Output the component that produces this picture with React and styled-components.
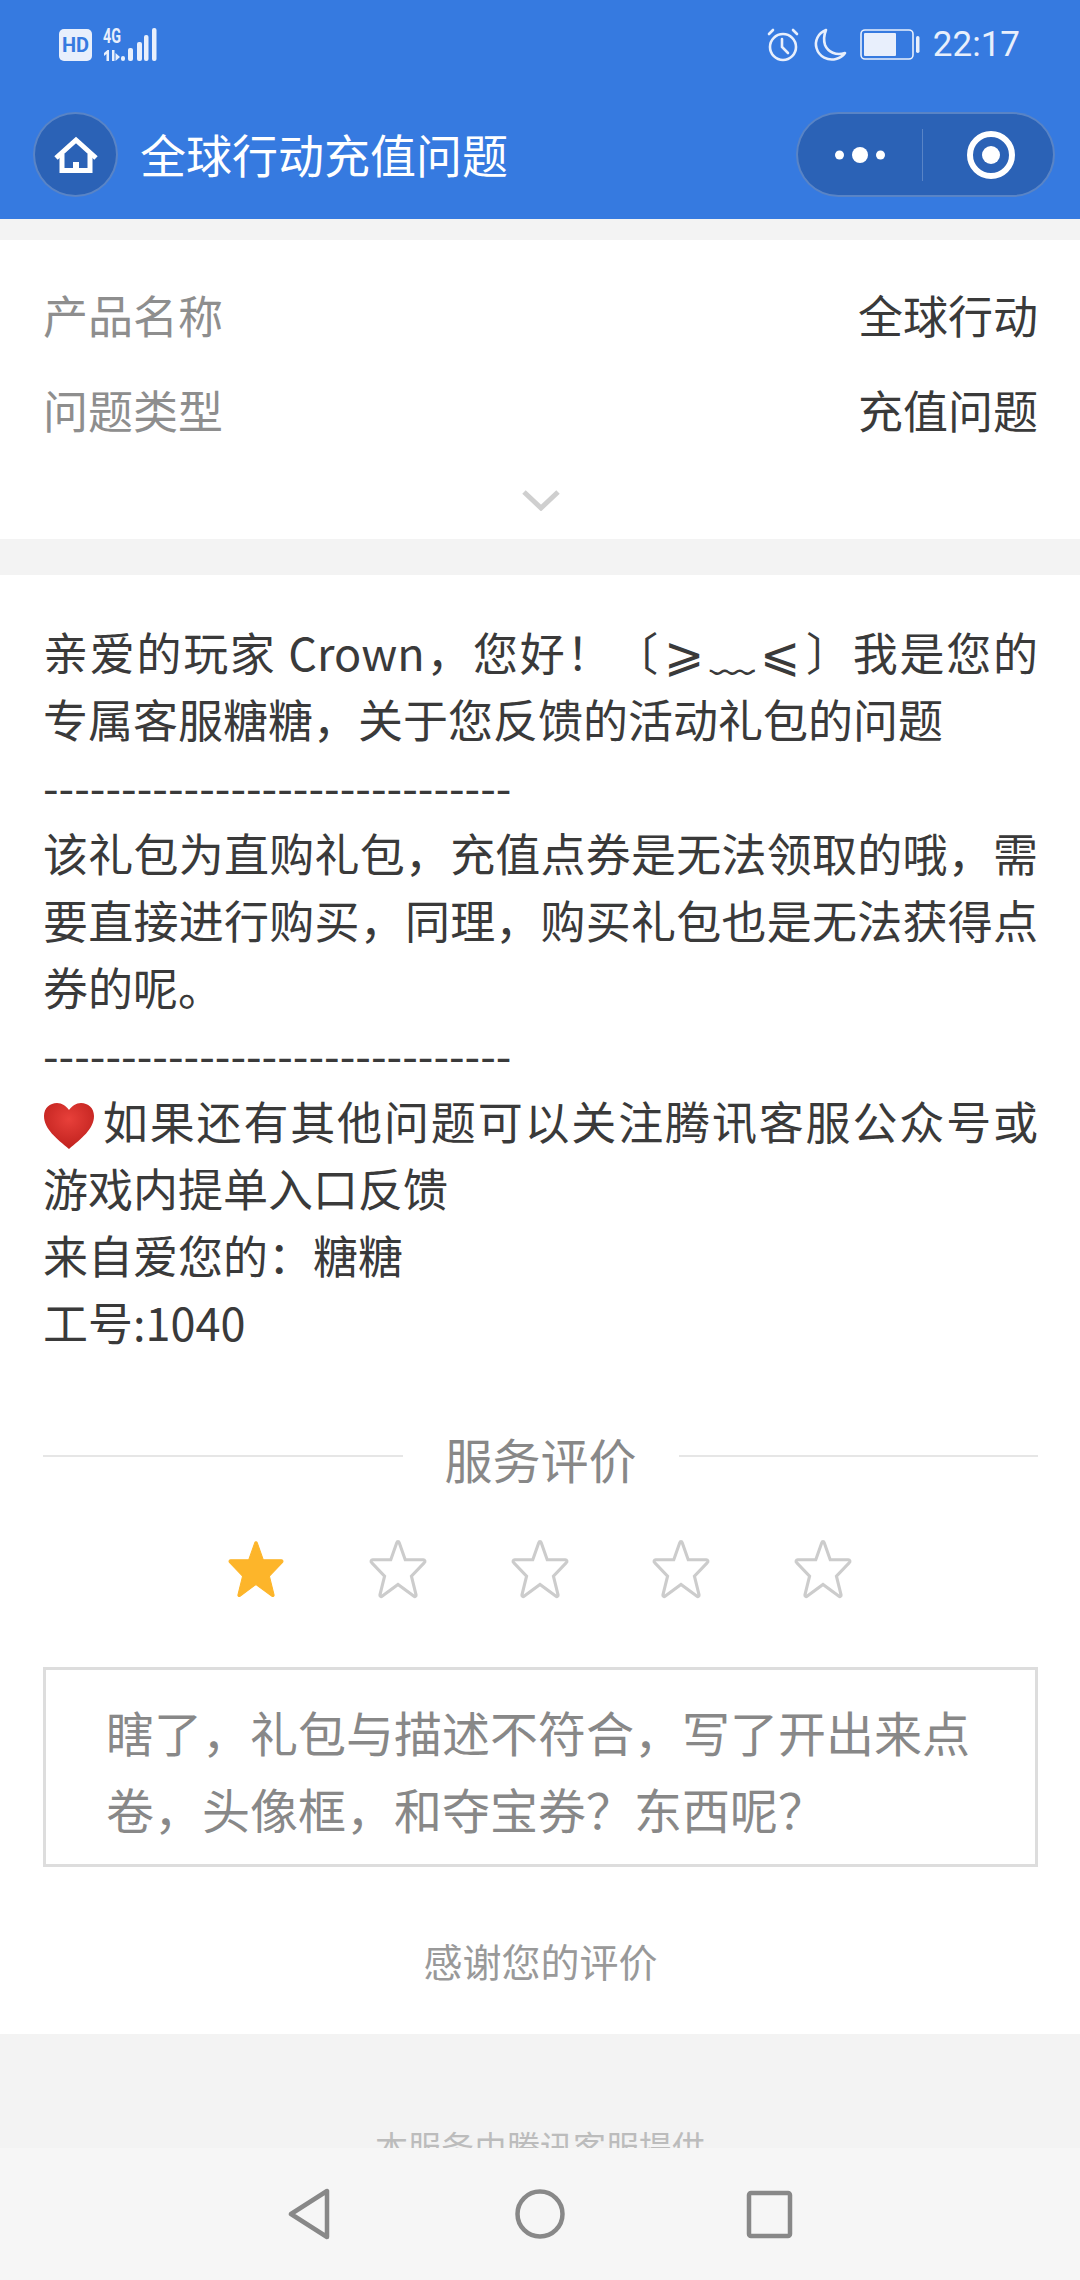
import React from "react";
import styled, { createGlobalStyle } from "styled-components";

const GlobalStyle = createGlobalStyle`
  html, body {
    margin: 0;
    padding: 0;
    background: #f3f3f3;
  }
  * {
    box-sizing: border-box;
  }
`;

const Page = styled.div`
  position: relative;
  width: 1080px;
  height: 2280px;
  overflow: hidden;
  background: #f3f3f3;
  font-family: "Noto Sans CJK SC", "Noto Sans", sans-serif;
`;

const Header = styled.header`
  height: 219px;
  background: #367ae0;
  color: #fff;
`;

const StatusBar = styled.div`
  height: 92px;
  padding: 23px 60px 0 59px;
  display: flex;
  align-items: flex-start;
  justify-content: space-between;
  color: #e8effc;
`;

const StatusGroup = styled.div`
  display: flex;
  align-items: center;
  gap: ${(p) => p.$gap || 0}px;
  height: 44px;
`;

const HdBadge = styled.span`
  width: 33px;
  height: 32px;
  border-radius: 5px;
  background: #e8effc;
  color: #367ae0;
  font: 700 20px/1 "Roboto", sans-serif;
  display: flex;
  align-items: center;
  justify-content: center;
`;

const Clock = styled.span`
  font: 400 35px/44px "Roboto", sans-serif;
`;

const NavBar = styled.div`
  height: 127px;
  padding: 20px 25px 0 33px;
  display: flex;
  align-items: flex-start;
`;

const HomeButton = styled.div`
  width: 85px;
  height: 85px;
  border-radius: 50%;
  background: #2b62b6;
  border: 2px solid rgba(255, 255, 255, 0.22);
  display: flex;
  align-items: center;
  justify-content: center;
`;

const Title = styled.h1`
  margin: 0 0 0 22px;
  font-size: 46px;
  font-weight: 400;
  line-height: 83px;
`;

const Capsule = styled.div`
  margin-left: auto;
  width: 259px;
  height: 85px;
  border-radius: 43px;
  background: #2b62b6;
  border: 2px solid rgba(255, 255, 255, 0.22);
  display: flex;
  align-items: center;
`;

const CapsuleCell = styled.div`
  flex: 1;
  height: 52px;
  display: flex;
  align-items: center;
  justify-content: center;
  padding-left: ${(p) => (p.$divided ? "6px" : "0")};
  border-left: ${(p) => (p.$divided ? "1px solid rgba(255,255,255,0.22)" : "none")};
`;

const ProductCard = styled.section`
  margin-top: 21px;
  height: 299px;
  background: #fff;
  padding: 27px 42px 0 43px;
`;

const InfoRow = styled.div`
  height: 95px;
  display: flex;
  align-items: center;
  justify-content: space-between;
  font-size: 45px;
`;

const InfoLabel = styled.span`
  color: #8e8e8e;
`;

const InfoValue = styled.span`
  color: #3a3a3a;
`;

const Expand = styled.div`
  height: 85px;
  display: flex;
  align-items: center;
  justify-content: center;
`;

const MessageCard = styled.section`
  margin-top: 36px;
  height: 1459px;
  background: #fff;
  padding: 43px 42px 0 43px;
`;

const Message = styled.div`
  font-size: 45px;
  line-height: 67px;
  color: #3a3a3a;
  text-align: justify;
  height: 739px;
`;

const Kaomoji = styled.span`
  font-size: 48px;
  line-height: 1;
  padding: 0 4px;
`;

const Heart = styled.svg`
  width: 52px;
  height: 47px;
  margin-right: 6px;
  vertical-align: -9px;
`;

const RatingHeading = styled.div`
  margin-top: 66px;
  height: 70px;
  display: flex;
  align-items: center;
  gap: 42px;
  font-size: 48px;
  color: #888;
`;

const RatingLine = styled.span`
  flex: 1;
  height: 2px;
  background: #e6e6e6;
  margin-top: -4px;
`;

const Stars = styled.div`
  margin-top: 44px;
  padding: 0 183px 0 181px;
  display: flex;
  justify-content: space-between;
`;

const StarIcon = styled.svg`
  width: 64px;
  height: 64px;
  display: block;
`;

const Comment = styled.div`
  margin-top: 66px;
  height: 200px;
  border: 3px solid #ddd;
  padding: 23px 60px 0;
  font-size: 48px;
  line-height: 77px;
  color: #888;
`;

const Thanks = styled.div`
  margin-top: 64px;
  text-align: center;
  font-size: 39px;
  line-height: 58px;
  color: #999;
`;

const Footer = styled.footer`
  padding-top: 88px;
  text-align: center;
  font-size: 33px;
  line-height: 48px;
  color: #bcbcbc;
`;

const BottomNav = styled.nav`
  position: absolute;
  left: 0;
  right: 0;
  bottom: 0;
  height: 132px;
  background: #f6f6f6;
  display: flex;
  align-items: center;
  justify-content: center;
  gap: 180px;
`;

const NavIcon = styled.svg`
  width: 50px;
  height: 52px;
  display: block;
`;

function SignalIcon() {
  return (
    <svg width="54" height="34" viewBox="0 0 54 34" fill="#e8effc">
      <text
        x="0"
        y="15"
        fontFamily="Roboto, sans-serif"
        fontSize="20"
        fontWeight="700"
        textLength="18"
        lengthAdjust="spacingAndGlyphs"
      >
        4G
      </text>
      <path d="M3.500 33V26L1 28v-3l3.500-3H6v11zM9 22h2.500v11H9zM12.500 25l4.500 4-4.500 4z" />
      <rect x="18" y="28" width="4" height="5" rx="2" />
      <rect x="25" y="20" width="5" height="13" rx="2" />
      <rect x="34" y="14" width="5" height="19" rx="2" />
      <rect x="41" y="7" width="4.500" height="26" rx="2" />
      <rect x="49" y="0" width="4.500" height="33" rx="2" />
    </svg>
  );
}

function AlarmIcon() {
  return (
    <svg width="34" height="34" viewBox="0 0 34 34" fill="none" stroke="#e8effc" strokeWidth="2.600" strokeLinecap="round">
      <circle cx="17" cy="19" r="13" />
      <path d="M16 11v8l6 6M3 6l4-4M31 6l-4-4" />
    </svg>
  );
}

function MoonIcon() {
  return (
    <svg width="34" height="34" viewBox="0 0 34 34" fill="none" stroke="#e8effc" strokeWidth="2.600" strokeLinejoin="round">
      <path d="M13 2C5 5 1.500 13 3.500 20 6 29 15 33 23 31c4-1 7-3 9-6-9 3-17-1-20-8-1.500-5-1-10 1-15z" />
    </svg>
  );
}

function BatteryIcon() {
  return (
    <svg width="60" height="32" viewBox="0 0 60 32">
      <rect x="1" y="1" width="52" height="29" rx="4" fill="none" stroke="#e8effc" strokeWidth="1.600" />
      <rect x="4" y="4" width="32" height="23" rx="1" fill="#e8effc" />
      <rect x="56" y="7" width="3.500" height="17" rx="1.700" fill="#e8effc" />
    </svg>
  );
}

function HomeIcon() {
  return (
    <svg width="46" height="40" viewBox="0 0 46 40" fill="none" stroke="#fff" strokeWidth="5">
      <path d="M3 23L23 5l20 18" />
      <path d="M9 19v16.500h28V19" />
      <rect x="20" y="27" width="6" height="8" fill="#fff" stroke="none" />
    </svg>
  );
}

function MenuDots() {
  return (
    <svg width="50" height="18" viewBox="0 0 50 18" fill="#fff">
      <circle cx="4.500" cy="9" r="4.500" />
      <circle cx="25" cy="9" r="8" />
      <circle cx="45.500" cy="9" r="4.500" />
    </svg>
  );
}

function CloseTarget() {
  return (
    <svg width="48" height="48" viewBox="0 0 48 48">
      <circle cx="24" cy="24" r="21" fill="none" stroke="#fff" strokeWidth="6" />
      <circle cx="24" cy="24" r="9" fill="#fff" />
    </svg>
  );
}

function Chevron() {
  return (
    <svg width="38" height="22" viewBox="0 0 38 22" fill="none" stroke="#cfcfcf" strokeWidth="5">
      <path d="M2 3l17 16L36 3" />
    </svg>
  );
}

function HeartEmoji() {
  return (
    <Heart viewBox="0 0 52 47">
      <defs>
        <radialGradient id="heartFill" cx="50%" cy="35%" r="70%">
          <stop offset="0%" stopColor="#e8403a" />
          <stop offset="100%" stopColor="#bd1f1c" />
        </radialGradient>
      </defs>
      <path
        d="M26 47C14 37 1 27 1 14 1 6 7 1 14 1c5 0 9 3 12 7 3-4 7-7 12-7 7 0 13 5 13 13 0 13-13 23-25 33z"
        fill="url(#heartFill)"
      />
    </Heart>
  );
}

const STAR_PATH =
  "M30 4.500c.6 0 1 .4 1.200 1L37 22h17.500c1.500 0 2.200 1.800 1 2.800L43 38l4.500 18c.3 1.300-1 2.200-2 1.400L30 46 14.500 57.400c-1 .8-2.300-.1-2-1.400L17 38 4.500 24.800c-1.200-1-.5-2.800 1-2.800H23l5.800-16.500c.2-.6.600-1 1.200-1z";

function Star({ active }) {
  return (
    <StarIcon viewBox="0 0 60 62">
      <path
        d={STAR_PATH}
        fill={active ? "#fdb52a" : "none"}
        stroke={active ? "#fdb52a" : "#cccccc"}
        strokeWidth={active ? 1 : 3}
      />
    </StarIcon>
  );
}

const DIVIDER = "------------------------------";

export default function App() {
  return (
    <Page>
      <GlobalStyle />
      <Header>
        <StatusBar>
          <StatusGroup $gap={11}>
            <HdBadge>HD</HdBadge>
            <SignalIcon />
          </StatusGroup>
          <StatusGroup $gap={13}>
            <AlarmIcon />
            <MoonIcon />
            <BatteryIcon />
            <Clock>22:17</Clock>
          </StatusGroup>
        </StatusBar>
        <NavBar>
          <HomeButton>
            <HomeIcon />
          </HomeButton>
          <Title>全球行动充值问题</Title>
          <Capsule>
            <CapsuleCell>
              <MenuDots />
            </CapsuleCell>
            <CapsuleCell $divided>
              <CloseTarget />
            </CapsuleCell>
          </Capsule>
        </NavBar>
      </Header>

      <ProductCard>
        <InfoRow>
          <InfoLabel>产品名称</InfoLabel>
          <InfoValue>全球行动</InfoValue>
        </InfoRow>
        <InfoRow>
          <InfoLabel>问题类型</InfoLabel>
          <InfoValue>充值问题</InfoValue>
        </InfoRow>
        <Expand>
          <Chevron />
        </Expand>
      </ProductCard>

      <MessageCard>
        <Message>
          亲爱的玩家 Crown，您好！〔<Kaomoji>⩾</Kaomoji>﹏<Kaomoji>⩽</Kaomoji>〕我是您的专属客服糖糖，关于您反馈的活动礼包的问题
          <br />
          {DIVIDER}
          <br />
          该礼包为直购礼包，充值点券是无法领取的哦，需要直接进行购买，同理，购买礼包也是无法获得点券的呢。
          <br />
          {DIVIDER}
          <br />
          <HeartEmoji />
          如果还有其他问题可以关注腾讯客服公众号或游戏内提单入口反馈
          <br />
          来自爱您的：糖糖
          <br />
          工号:1040
        </Message>

        <RatingHeading>
          <RatingLine />
          服务评价
          <RatingLine />
        </RatingHeading>

        <Stars>
          {[1, 2, 3, 4, 5].map((n) => (
            <Star key={n} active={n === 1} />
          ))}
        </Stars>

        <Comment>瞎了，礼包与描述不符合，写了开出来点卷，头像框，和夺宝券？东西呢？</Comment>
        <Thanks>感谢您的评价</Thanks>
      </MessageCard>

      <Footer>本服务由腾讯客服提供</Footer>

      <BottomNav>
        <NavIcon viewBox="0 0 50 52" fill="none" stroke="#888" strokeWidth="4.500" strokeLinejoin="round">
          <path d="M42 3v46L6 26z" />
        </NavIcon>
        <NavIcon viewBox="0 0 50 52" fill="none" stroke="#888" strokeWidth="4.500">
          <circle cx="25" cy="26" r="22.500" />
        </NavIcon>
        <NavIcon viewBox="0 0 50 52" fill="none" stroke="#888" strokeWidth="4.500" strokeLinejoin="round">
          <rect x="4" y="5" width="41" height="43" rx="2" />
        </NavIcon>
      </BottomNav>
    </Page>
  );
}
